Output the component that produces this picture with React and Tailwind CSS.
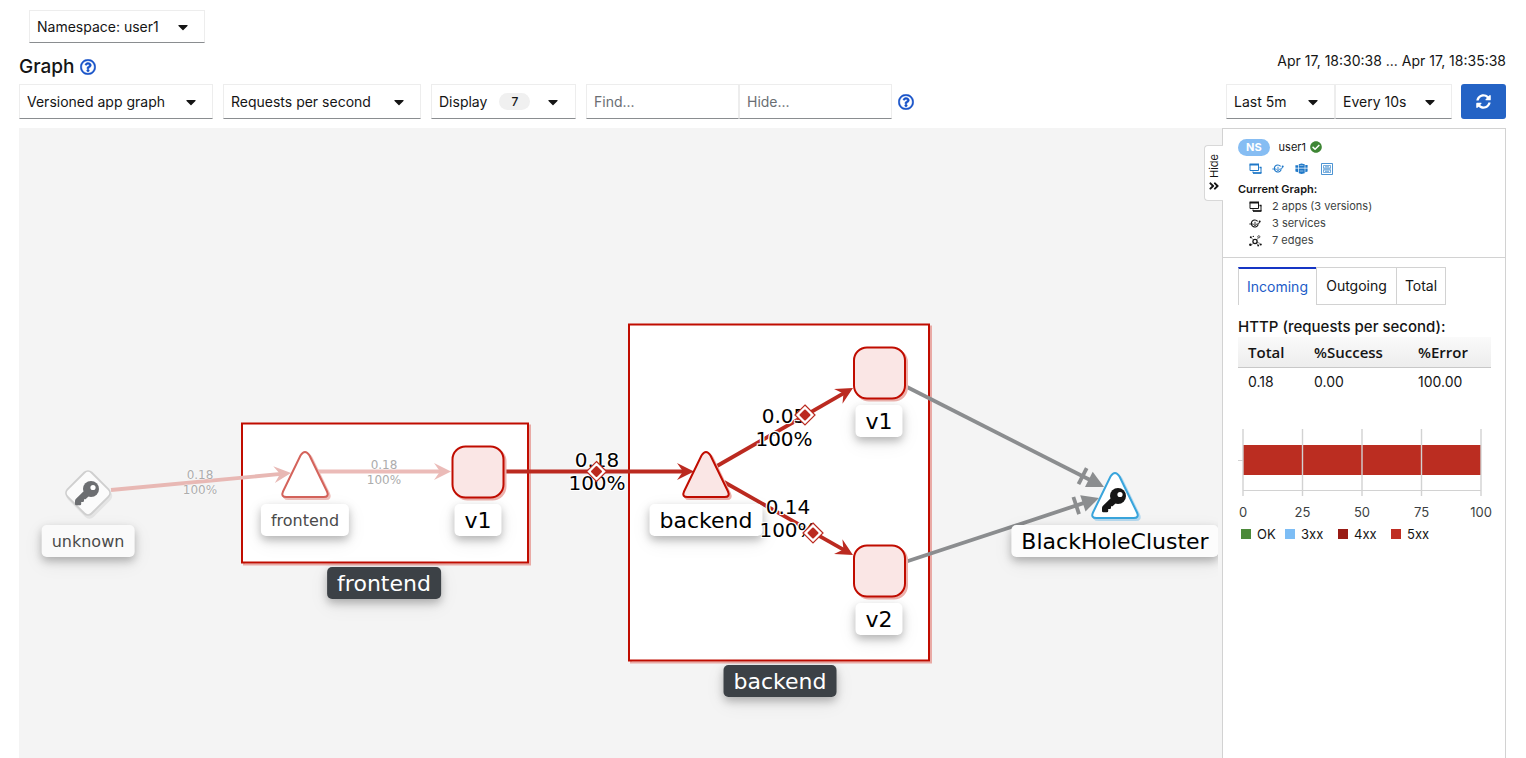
import React from "react";
import {
  FaAngleDoubleRight,
  FaCaretDown,
  FaCheckCircle,
  FaRegQuestionCircle,
  FaSyncAlt,
} from "react-icons/fa";

const fieldBorder =
  "border border-[#ededed] border-b-[#8a8d90] bg-white text-[14px] leading-5 text-[#151515]";

function Dropdown({ label, value, width, height = "h-[35px]" }) {
  return (
    <div className={`relative ${width}`}>
      <select
        aria-label={label}
        defaultValue={value}
        className={`w-full appearance-none rounded-none pl-[7px] pr-8 outline-none ${height} ${fieldBorder}`}
      >
        <option>{value}</option>
      </select>
      <FaCaretDown className="pointer-events-none absolute right-[14px] top-1/2 size-4 -translate-y-1/2 text-[#151515]" />
    </div>
  );
}

function HelpButton({ label }) {
  return (
    <button type="button" aria-label={label} className="text-[#1551c8]">
      <FaRegQuestionCircle className="size-4" stroke="currentColor" strokeWidth="14" />
    </button>
  );
}

/* ---------- small resource icons ---------- */

function AppsIcon() {
  return (
    <svg viewBox="0 0 13 12" className="h-3 w-[13px]" fill="none" stroke="currentColor">
      <path d="M1 1.5h8.5v6H1z" />
      <path d="M.5 1.5h9.500" strokeWidth="2" />
      <path d="M11 4.5h1v5.500H4V8.500" />
      <path d="M10.500 4.500h2M4 10h8.500" strokeWidth="1.400" />
    </svg>
  );
}

function ServicesIcon() {
  return (
    <svg viewBox="0 0 12 10" className="h-[10px] w-3" fill="none" stroke="currentColor">
      <path d="M8.600 2.300A3.500 3.500 0 1 0 9.200 5.500" strokeWidth="1.100" />
      <path d="M.3 5h4M7.500 5h2l1-2" strokeWidth=".9" />
      <circle cx="10.700" cy="2.500" r="1" fill="currentColor" stroke="none" />
      <path d="M6 2.800v3.500M4.500 5.300L6 6.800l1.500-1.500" strokeWidth=".9" />
    </svg>
  );
}

function WorkloadsIcon() {
  return (
    <svg viewBox="0 0 13 12" className="h-3 w-[13px]" fill="currentColor">
      <path d="M3.800 1.200 6.500.5l3.200.7v3.500H3.800zM3.800 5.600h5.900v4.600l-3.200.9-2.700-.9z" />
      <path d="M.4 2.200h2.700v2.600H.4zM.4 5.600h2.700v3.600L.4 8.500zM10.300 2h2.300v2.800h-2.300zM10.300 5.600h2.300v2.900l-2.300.7z" />
      <path d="M4.600 2.400h3.800M4.600 8h3.800" stroke="#fff" strokeWidth=".5" />
    </svg>
  );
}

function ConfigIcon() {
  return (
    <svg viewBox="0 0 12 12" className="size-3" fill="none" stroke="currentColor">
      <path d="M.5.5h11v11H.5z" strokeWidth=".8" />
      <path d="M2.500 2.500h7v2.500h-7zM2.500 7h7v2.500h-7z" strokeWidth=".6" />
      <path d="M2 6h8M4 3.800h4M4 8.300h4" strokeWidth=".7" />
    </svg>
  );
}

function TopologyIcon() {
  return (
    <svg viewBox="0 0 13 12" className="h-3 w-[13px]" fill="none" stroke="currentColor">
      <circle cx="6" cy="6.500" r="2.100" strokeWidth="1.300" />
      <path d="M2 2.500l2.500 2.500M7.500 5l1.800-2.200M4.500 8 2.500 10M7.500 8l1.500 2.500M8 7l3 1.500" strokeWidth=".5" />
      <circle cx="9.800" cy="1.800" r="1.100" strokeWidth=".7" />
      <g fill="currentColor" stroke="none">
        <circle cx="1.800" cy="2.200" r="1" />
        <circle cx="4.300" cy="1.400" r=".7" />
        <circle cx="1.400" cy="9.800" r="1.300" />
        <circle cx="9.200" cy="10.500" r=".9" />
        <circle cx="11.700" cy="9.500" r="1.100" />
      </g>
    </svg>
  );
}

/* ---------- graph ---------- */

const RED = "#c00c00";
const EDGE_RED = "#bb2a20";
const GREY = "#8b8d8f";

function Edge({ x1, y1, x2, y2, color, kind = "vee" }) {
  const length = Math.hypot(x2 - x1, y2 - y1);
  const angle = (Math.atan2(y2 - y1, x2 - x1) * 180) / Math.PI;
  return (
    <g transform={`translate(${x1} ${y1}) rotate(${angle})`}>
      <path d={`M0 0H${length - 10}`} stroke={color} strokeWidth="3.800" />
      {kind === "vee" ? (
        <path d={`M${length} 0l-17 -8.500l6 8.500l-6 8.500z`} fill={color} />
      ) : (
        <>
          <path d={`M${length} 0l-17 -8.500v17z`} fill={color} />
          <path d={`M${length - 24} -9v18`} stroke={color} strokeWidth="3.800" />
        </>
      )}
    </g>
  );
}

function Triangle({ x, y, stroke, fill, shadow }) {
  const d =
    "M-4.500 3.500Q0 -3.500 4.500 3.500L22 39.500Q24.500 45 18.500 45H-18.500Q-24.500 45 -22 39.500Z";
  return (
    <g transform={`translate(${x} ${y})`} strokeWidth="2">
      <path d={d} transform="translate(2 2)" fill={shadow} stroke={shadow} />
      <path d={d} fill={fill} stroke={stroke} />
    </g>
  );
}

function Square({ x, y }) {
  return (
    <g strokeWidth="2">
      <rect x={x + 2} y={y + 2} width="51" height="51" rx="13" fill="#ecb1ac" stroke="#ecb1ac" />
      <rect x={x} y={y} width="51" height="51" rx="13" fill="#fae6e5" stroke={RED} />
    </g>
  );
}

function Group({ x, y, width, height }) {
  return (
    <g fill="none" strokeWidth="2">
      <rect x={x + 2} y={y + 2} width={width} height={height} stroke="#e9aaa5" />
      <rect x={x} y={y} width={width} height={height} fill="#fff" stroke={RED} />
    </g>
  );
}

/* Origin is the centre of the key's bow. */
function Key({ x, y, color }) {
  return (
    <g transform={`translate(${x} ${y})`}>
      <path
        d="M-7.600 2.500L-15 9.800Q-16 10.800 -16 12V15Q-16 16.200 -14.800 16.200H-11Q-9.800 16.200 -9.800 15V13H-8.200Q-7 13 -7 11.800V10.200H-5.500L-2.500 7.600Z"
        fill={color}
      />
      <circle r="8" fill={color} />
      <circle cx="2" cy="-1.500" r="2.600" fill="#fff" />
    </g>
  );
}

function Marker({ x, y }) {
  return (
    <g transform={`translate(${x} ${y})`}>
      <path d="M0 -10L10 0L0 10L-10 0Z" fill="#fff" stroke={EDGE_RED} strokeWidth="1.200" />
      <path
        d="M0 -4.500L4.500 0L0 4.500L-4.500 0Z"
        fill={EDGE_RED}
        stroke={EDGE_RED}
        strokeWidth="2"
        strokeLinejoin="round"
      />
    </g>
  );
}

const edgeLabels = [
  { values: ["0.18", "100%"], place: "left-[181px] top-[340px]", faded: true },
  { values: ["0.18", "100%"], place: "left-[365px] top-[330px]", faded: true },
  { values: ["0.18", "100%"], place: "left-[578px] top-[321px]" },
  { values: ["0.05", "100%"], place: "left-[765px] top-[277px]" },
  { values: ["0.14", "100%"], place: "left-[769px] top-[368px]" },
];

const nodeLabels = [
  { name: "unknown", place: "left-[69px] top-[397px]", look: "bg-[#fafafa] text-[16px] text-[#4a4a4a]" },
  { name: "frontend", place: "left-[286px] top-[376px]", look: "bg-white text-[16px] text-[#4a4a4a]" },
  { name: "v1", place: "left-[459px] top-[376px]", look: "bg-white text-[22px] text-black" },
  { name: "backend", place: "left-[687px] top-[376px]", look: "bg-white text-[22px] text-black" },
  { name: "v1", place: "left-[860px] top-[277px]", look: "bg-white text-[22px] text-black" },
  { name: "v2", place: "left-[860px] top-[475px]", look: "bg-white text-[22px] text-black" },
  { name: "BlackHoleCluster", place: "left-[1096px] top-[397px]", look: "bg-[#fcfcfc] text-[22px] text-black" },
  { name: "frontend", place: "left-[365px] top-[439px]", look: "bg-[#3c4146] text-[22px] text-white" },
  { name: "backend", place: "left-[761px] top-[537px]", look: "bg-[#3c4146] text-[22px] text-white" },
];

function Graph() {
  return (
    <section
      aria-label="Service graph"
      className="relative mr-1 min-h-[600px] min-w-0 flex-1 overflow-hidden bg-[#f4f4f4] font-['DejaVu_Sans',Verdana,sans-serif]"
    >
      <svg className="absolute left-0 top-0 h-[630px] w-[1220px]" viewBox="0 0 1220 630" fill="none">
        <Group x={223} y={295.500} width={286} height={139} />
        <Group x={610} y={196.500} width={300} height={336} />
        <Edge x1={92} y1={362} x2={272} y2={345} color="#e8b8b4" />
        <Edge x1={292} y1={343.500} x2={432} y2={343.500} color="#ebbbb8" />
        <Edge x1={485} y1={343.500} x2={675} y2={343.500} color={EDGE_RED} />
        <Edge x1={698} y1={338} x2={834} y2={260} color={EDGE_RED} />
        <Edge x1={705} y1={354} x2={834} y2={427} color={EDGE_RED} />
        <Edge x1={886} y1={258} x2={1085} y2={359} color={GREY} kind="blocked" />
        <Edge x1={886} y1={434} x2={1080} y2={370} color={GREY} kind="blocked" />
        <g transform="translate(69 365) rotate(45)" strokeWidth="1.800">
          <rect x="-14" y="-16" width="34" height="34" rx="5" fill="#e4e4e4" stroke="#e4e4e4" />
          <rect x="-17" y="-17" width="34" height="34" rx="5" fill="#fbfbfb" stroke="#cfcfcf" />
        </g>
        <Key x={72} y={361} color="#6c6e71" />
        <Triangle x={286} y={324} fill="#fff" stroke="#d4635b" shadow="#efc1bd" />
        <Square x={433.500} y={318.500} />
        <Triangle x={687} y={324} fill="#fae6e5" stroke={RED} shadow="#ecb1ac" />
        <Square x={835} y={219.500} />
        <Square x={835} y={417.500} />
        <Triangle x={1096} y={345} fill="#fff" stroke="#39a5dc" shadow="#b5d9ef" />
        <Key x={1099} y={368} color="#151515" />
      </svg>
      {nodeLabels.map(({ name, place, look }) => (
        <div
          key={place}
          className={`absolute flex h-8 -translate-x-1/2 items-center whitespace-nowrap rounded-[5px] px-[10px] pt-[2px] leading-8 shadow-[0_4px_8px_rgba(0,0,0,0.25),0_6px_20px_rgba(0,0,0,0.08)] ${place} ${look}`}
        >
          {name}
        </div>
      ))}
      {edgeLabels.map(({ values, place, faded }) => (
        <div
          key={place}
          className={`absolute flex -translate-x-1/2 flex-col items-center ${place} ${
            faded
              ? "text-[12px] leading-[15px] text-[#acacac] [text-shadow:0_0_1px_#fff,0_0_2px_#fff]"
              : "text-[20px] leading-[23px] text-black [text-shadow:1px_1px_0_#fff,-1px_-1px_0_#fff,1px_-1px_0_#fff,-1px_1px_0_#fff,0_0_2px_#fff]"
          }`}
        >
          <span>{values[0]}</span>
          <span>{values[1]}</span>
        </div>
      ))}
      <svg className="absolute left-0 top-0 h-[630px] w-[1220px]" viewBox="0 0 1220 630" fill="none">
        <Marker x={577.500} y={343.500} />
        <Marker x={786} y={287} />
        <Marker x={794} y={405} />
      </svg>
    </section>
  );
}

/* ---------- summary panel ---------- */

const ticks = [0, 25, 50, 75, 100];

function RequestsChart() {
  return (
    <svg
      viewBox="0 0 254 96"
      className="h-24 w-[254px] overflow-visible"
      role="img"
      aria-label="Incoming requests by status"
    >
      <rect x="5" y="16" width="238" height="30" fill="#bb2d21" />
      <g stroke="#d2d2d2">
        <path d="M0 31.500H5M5 61.500H243" fill="none" />
        {ticks.map((t) => (
          <path key={t} d={`M${5 + t * 2.38} 0V67`} strokeWidth="1.400" />
        ))}
      </g>
      <g fill="#3c3f42" fontSize="13" textAnchor="middle">
        {ticks.map((t) => (
          <text key={t} x={5 + t * 2.38} y="88">
            {t}
          </text>
        ))}
      </g>
    </svg>
  );
}

const legend = [
  ["OK", "bg-[#4c8a3a]", "w-11"],
  ["3xx", "bg-[#7dbdf5]", "w-[53px]"],
  ["4xx", "bg-[#991b14]", "w-[53px]"],
  ["5xx", "bg-[#bf2d22]", "w-[53px]"],
];

const counts = [
  [AppsIcon, "2 apps (3 versions)"],
  [ServicesIcon, "3 services"],
  [TopologyIcon, "7 edges"],
];

const links = [
  ["Applications", AppsIcon, "w-[23px]"],
  ["Services", ServicesIcon, "w-[23px]"],
  ["Workloads", WorkloadsIcon, "w-[26px]"],
  ["Istio config", ConfigIcon, "w-3"],
];

function SummaryPanel() {
  return (
    <aside className="relative w-[284px] shrink-0 border-x border-t border-[#d2d2d2] bg-white text-[#151515]">
      <button
        type="button"
        className="absolute -left-[19px] top-4 flex h-[56px] w-[19px] flex-col items-center justify-center gap-[2px] rounded-l-sm border border-r-0 border-[#d8d8d8] bg-white text-[11px] leading-4"
      >
        <span className="rotate-180 [writing-mode:vertical-rl]">Hide</span>
        <FaAngleDoubleRight className="size-3" />
      </button>

      <div className="border-b border-[#d2d2d2] px-[15px] pb-2 pt-[9px] text-[11px]">
        <div className="flex h-[18px] items-center">
          <span className="rounded-full bg-[#86bdf3] px-2 text-[11px] font-bold leading-[17px] text-white">NS</span>
          <span className="ml-[9px]">user1</span>
          <FaCheckCircle className="ml-1 size-3 text-[#3e8635]" />
        </div>
        <nav aria-label="Namespace resources" className="mt-1 flex h-[18px] items-center pl-[11px] text-[#1f78c8]">
          {links.map(([name, Icon, width]) => (
            <a key={name} href="#" aria-label={name} className={width}>
              <Icon />
            </a>
          ))}
        </nav>
        <div className="mt-[3px] font-semibold leading-[17px]">Current Graph:</div>
        <ul className="text-[#3c3f42]">
          {counts.map(([Icon, text]) => (
            <li key={text} className="flex h-[17px] items-center pl-[11px]">
              <span className="w-[23px] text-[#151515]">
                <Icon />
              </span>
              {text}
            </li>
          ))}
        </ul>
      </div>

      <div className="px-[15px] pt-[9px]">
        <div role="tablist" className="flex h-[38px] text-[14px] leading-5">
          <button
            type="button"
            role="tab"
            aria-selected="true"
            className="w-[78px] border-l border-t-2 border-l-[#d2d2d2] border-t-[#1535c4] text-[#1c5cc8]"
          >
            Incoming
          </button>
          <button type="button" role="tab" aria-selected="false" className="w-[81px] border border-[#d2d2d2]">
            Outgoing
          </button>
          <button type="button" role="tab" aria-selected="false" className="w-[49px] border border-l-0 border-[#d2d2d2]">
            Total
          </button>
        </div>

        <h2 className="mt-3 whitespace-nowrap text-[15px] font-medium leading-5">HTTP (requests per second):</h2>
        <table className="w-[253px] table-fixed text-left text-[15px]">
          <thead className="bg-linear-to-b from-[#fafafa] to-[#ededed] font-['Open_Sans',sans-serif]">
            <tr className="h-[30px] border-b border-[#c8c8c8]">
              <th className="w-[66px] pl-[10px] leading-5 font-semibold">Total</th>
              <th className="w-[104px] pl-[10px] leading-5 font-semibold">%Success</th>
              <th className="pl-[10px] leading-5 font-semibold">%Error</th>
            </tr>
          </thead>
          <tbody>
            <tr className="h-[29px] text-[14px]">
              <td className="pl-[10px]">0.18</td>
              <td className="pl-[10px]">0.00</td>
              <td className="pl-[10px]">100.00</td>
            </tr>
          </tbody>
        </table>

        <div className="mt-[33px]">
          <RequestsChart />
        </div>
        <ul className="flex pl-[3px] text-[13px] leading-[18px]">
          {legend.map(([name, color, width]) => (
            <li key={name} className={`flex items-center gap-[6px] ${width}`}>
              <span className={`size-[10px] ${color}`} />
              {name}
            </li>
          ))}
        </ul>
      </div>
    </aside>
  );
}

export default function App() {
  return (
    <div className="flex min-h-screen flex-col bg-white pl-[19px] pr-5 font-[Inter,sans-serif] text-[#151515]">
      <header className="pl-[10px] pt-[10px]">
        <Dropdown label="Namespace" value="Namespace: user1" width="w-44" height="h-[33px]" />
      </header>

      <div className="flex h-[41px] items-center justify-between">
        <div className="flex items-center gap-[6px] pt-[6px]">
          <h1 className="text-[19px] font-medium leading-6">Graph</h1>
          <HelpButton label="Graph help" />
        </div>
        <p className="pb-[6px] text-[14px] leading-5">Apr 17, 18:30:38 ... Apr 17, 18:35:38</p>
      </div>

      <div className="mb-[9px] flex items-center justify-between">
        <div className="flex items-center gap-[10px]">
          <Dropdown label="Graph type" value="Versioned app graph" width="w-[194px]" />
          <Dropdown label="Edge labels" value="Requests per second" width="w-[198px]" />
          <button type="button" className={`flex h-[35px] w-[145px] items-center pl-[7px] pr-[14px] ${fieldBorder}`}>
            Display
            <span className="ml-3 rounded-full bg-[#f0f0f0] px-3 text-[12px] font-medium leading-[17px]">7</span>
            <FaCaretDown className="ml-auto size-4" />
          </button>
          <div className="flex">
            <input
              type="text"
              aria-label="Find"
              placeholder="Find..."
              className={`h-[35px] w-[153px] px-[7px] placeholder:text-[#6a6e73] ${fieldBorder}`}
            />
            <input
              type="text"
              aria-label="Hide"
              placeholder="Hide..."
              className={`h-[35px] w-[153px] px-[7px] placeholder:text-[#6a6e73] ${fieldBorder}`}
            />
          </div>
          <div className="-ml-1 flex">
            <HelpButton label="Find and hide help" />
          </div>
        </div>
        <div className="flex items-center">
          <Dropdown label="Duration" value="Last 5m" width="w-[109px]" />
          <Dropdown label="Refresh interval" value="Every 10s" width="w-[117px]" />
          <button
            type="button"
            aria-label="Refresh"
            className="ml-[9px] flex h-[35px] w-[45px] items-center justify-center rounded-[3px] bg-[#2463c5] text-white"
          >
            <FaSyncAlt className="size-[15px]" />
          </button>
        </div>
      </div>

      <main className="flex flex-1 bg-[#f4f4f4]">
        <Graph />
        <SummaryPanel />
      </main>
    </div>
  );
}
